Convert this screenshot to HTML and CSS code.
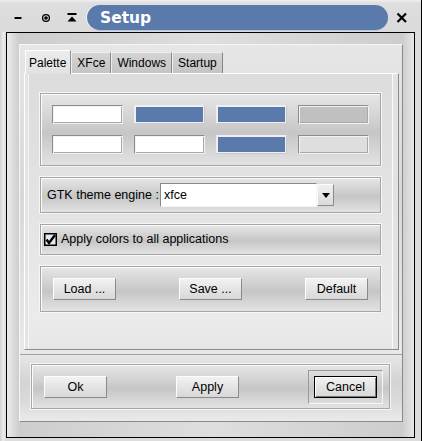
FILE: index.html
```html
<!DOCTYPE html>
<html>
<head>
<meta charset="utf-8">
<link rel="stylesheet" href="styles.css">
</head>
<body>
<div class="window">
  <div class="titlebar">
    <svg class="tb-btn tb-min" width="16" height="16" viewBox="0 0 16 16"><rect x="4.5" y="7" width="7" height="2" fill="#000"/></svg>
    <svg class="tb-btn tb-stick" width="16" height="16" viewBox="0 0 16 16"><circle cx="8" cy="8" r="3.4" fill="none" stroke="#000" stroke-width="1.3"/><circle cx="8" cy="8" r="1.8" fill="#000"/></svg>
    <svg class="tb-btn tb-shade" width="16" height="16" viewBox="0 0 16 16"><rect x="3.5" y="3" width="9" height="2" fill="#000"/><polygon points="8,6.5 12.5,11.5 3.5,11.5" fill="#000"/></svg>
    <div class="title-pill"><span class="title-text">Setup</span></div>
    <svg class="tb-btn tb-close" width="16" height="16" viewBox="0 0 16 16"><path d="M3.5 3.5 L12 12 M12 3.5 L3.5 12" stroke="#000" stroke-width="2.2" fill="none"/></svg>
  </div>
  <div class="frame">
    <div class="dialog">
      <div class="notebook">
        <div class="tabs">
          <div class="tab tab-active">Palette</div>
          <div class="tab">XFce</div>
          <div class="tab">Windows</div>
          <div class="tab">Startup</div>
        </div>
        <div class="page">
          <div class="group palette">
            <div class="swatch sw-white"></div>
            <div class="swatch sw-blue"></div>
            <div class="swatch sw-blue"></div>
            <div class="swatch sw-gray"></div>
            <div class="swatch sw-white"></div>
            <div class="swatch sw-white"></div>
            <div class="swatch sw-blue"></div>
            <div class="swatch sw-light"></div>
          </div>
          <div class="group engine">
            <span class="engine-label">GTK theme engine :</span>
            <div class="combo">
              <div class="combo-entry">xfce</div>
              <div class="combo-btn"><svg width="8" height="5" viewBox="0 0 8 5"><polygon points="0,0 8,0 4,5" fill="#000"/></svg></div>
            </div>
          </div>
          <div class="group apply">
            <svg class="check" width="13" height="13" viewBox="0 0 13 13"><rect x="0.75" y="0.75" width="11.5" height="11.5" fill="#e8e8e8" stroke="#000" stroke-width="1.5"/><path d="M2.5 6.5 L5 10 L11 2" stroke="#000" stroke-width="2.4" fill="none"/></svg>
            <span>Apply colors to all applications</span>
          </div>
          <div class="group files">
            <div class="btn">Load ...</div>
            <div class="btn">Save ...</div>
            <div class="btn">Default</div>
          </div>
        </div>
      </div>
      <div class="actions-wrap">
        <div class="group actions">
          <div class="btn">Ok</div>
          <div class="btn">Apply</div>
          <div class="default-frame"><div class="btn btn-default">Cancel</div></div>
        </div>
      </div>
    </div>
  </div>
</div>
</body>
</html>
```

FILE: styles.css
```css
* { box-sizing: border-box; }
html, body { margin: 0; padding: 0; }
body {
  width: 422px;
  height: 441px;
  overflow: hidden;
  background: #d8d8d8;
  font-family: "Liberation Sans", Arial, sans-serif;
  font-size: 12.5px;
  color: #000;
}
.window {
  width: 422px;
  height: 441px;
  display: flex;
  flex-direction: column;
  border-right: 1px solid #000;
  background: linear-gradient(90deg, #cfcfcf, #ececec 3px, #dcdcdc 6px);
}
.titlebar {
  height: 32px;
  flex: none;
  display: flex;
  align-items: center;
  padding-left: 10px;
  padding-top: 4px;
  background: linear-gradient(180deg, #f0f0f0, #dedede 3px, #dadada);
}
.tb-btn { flex: none; display: block; }
.tb-stick { margin-left: 12px; }
.tb-shade { margin-left: 10px; }
.tb-close { margin-left: 6px; }
.title-pill {
  margin-left: 7px;
  width: 301px;
  height: 25px;
  margin-top: -1px;
  border-radius: 13px;
  background: #5a7aac;
  box-shadow: -1px 0 0 #f4f4f4, 0 1px 0 #b8c4d8;
  display: flex;
  align-items: center;
  padding-left: 13px;
}
.title-text {
  font-family: "DejaVu Sans", Verdana, sans-serif;
  font-weight: bold;
  font-size: 15.5px;
  color: #fff;
  margin-top: 1px;
}
.frame {
  flex: 1;
  margin: 0 6px 3px 6px;
  border: 1px solid #000;
  padding: 11px 11px 15px 12px;
  background: linear-gradient(90deg, #ececec, #cdcdcd 12px, #dedede 50%, #cdcdcd calc(100% - 12px), #e6e6e6);
  display: flex;
}
.dialog {
  flex: 1;
  display: flex;
  flex-direction: column;
  border: 1px solid;
  border-color: #f6f6f6 #8a8a8a #8a8a8a #f6f6f6;
  background: linear-gradient(180deg, #e6e6e6, #d8d8d8 40%, #e8e8e8 80%, #e2e2e2);
}
.notebook {
  padding: 5px 3px 4px 4px;
  border-bottom: 1px solid #a0a0a0;
  box-shadow: 0 1px 0 #f8f8f8;
  flex: none;
}
.tabs {
  display: flex;
  align-items: flex-end;
  height: 23px;
  padding-left: 1px;
  position: relative;
  z-index: 1;
  font-size: 12px;
}
.tab {
  height: 21px;
  padding: 0 5px;
  display: flex;
  align-items: center;
  background: linear-gradient(180deg, #d4d4d4, #c4c4c4);
  border: 1px solid;
  border-bottom: none;
  border-color: #eeeeee #888888 #888888 #eeeeee;
}
.tab-active {
  height: 24px;
  margin-bottom: -1px;
  padding: 0 4px 0 3px;
  background: linear-gradient(180deg, #ececec, #e2e2e2);
  border-color: #ffffff #909090 #909090 #ffffff;
}
.page {
  height: 277px;
  border: 1px solid;
  border-color: #ffffff #8c8c8c #8c8c8c #ffffff;
  padding: 19px 17px 0 15px;
  display: flex;
  flex-direction: column;
  gap: 11px;
  background: linear-gradient(180deg, #dcdcdc, #e0e0e0 30%, #ebebeb 90%, #e6e6e6);
  box-shadow: inset -5px 0 0 #e2e2e2, inset -6px 0 0 #fafafa, inset 3px 0 0 #e4e4e4, inset 4px 0 0 #f4f4f4;
}
.group {
  border: 1px solid #a6a6a6;
  box-shadow: 0 0 0 1px #f6f6f6, inset 1px 1px 0 #fbfbfb;
  background: linear-gradient(180deg, #e6e6e6, #d2d2d2 35%, #c6c6c6 55%, #d6d6d6 80%, #e2e2e2);
}
.palette {
  height: 73px;
  display: grid;
  grid-template-columns: repeat(4, 1fr);
  grid-template-rows: 19px 19px;
  column-gap: 11px;
  row-gap: 11px;
  padding: 11px 11px 0 11px;
}
.swatch {
  border: 1px solid;
  border-color: #8c8c8c #f2f2f2 #f2f2f2 #8c8c8c;
  box-shadow: inset 1px 1px 0 #f2f2f2, inset -1px -1px 0 #a8a8a8;
}
.sw-white { background: #ffffff; }
.sw-blue { background: #5a7aac; box-shadow: inset 1px 1px 0 #eef0f4, inset -1px -1px 0 #eef0f4; border-color: #eeeeee #c8c8c8 #c8c8c8 #eeeeee; }
.sw-gray { background: #c0c0c0; }
.sw-light { background: #dedede; }
.engine {
  height: 36px;
  display: flex;
  align-items: center;
  padding-left: 6px;
}
.engine-label { width: 113px; white-space: nowrap; }
.combo {
  display: flex;
  align-items: center;
  height: 24px;
}
.combo-entry {
  width: 157px;
  height: 24px;
  background: #fff;
  border: 1px solid;
  border-color: #8a8a8a #f4f4f4 #f4f4f4 #8a8a8a;
  padding-left: 3px;
  display: flex;
  align-items: center;
}
.combo-btn {
  width: 17px;
  height: 22px;
  border: 1px solid;
  border-color: #fbfbfb #8a8a8a #8a8a8a #fbfbfb;
  background: linear-gradient(180deg, #f0f0f0, #dadada);
  display: flex;
  align-items: center;
  justify-content: center;
}
.combo-btn svg { display: block; margin-top: 1px; }
.apply {
  height: 31px;
  display: flex;
  align-items: center;
  padding-left: 3px;
  gap: 4px;
}
.apply span { margin-top: -1px; }
.check { display: block; flex: none; }
.files {
  height: 46px;
  display: flex;
  align-items: center;
  justify-content: space-between;
  padding: 0 12px 0 12px;
}
.btn {
  width: 63px;
  height: 22px;
  display: flex;
  align-items: center;
  justify-content: center;
  border: 1px solid;
  border-color: #fdfdfd #8a8a8a #8a8a8a #fdfdfd;
  background: linear-gradient(180deg, #f2f2f2, #e4e4e4 50%, #d8d8d8);
  flex: none;
}
.actions-wrap {
  flex: 1;
  padding: 9px 12px 12px 11px;
  display: flex;
  background: linear-gradient(180deg, #e6e6e6, #d4d4d4 40%, #dadada 70%, #eaeaea);
}
.actions {
  flex: 1;
  display: flex;
  align-items: center;
  justify-content: space-between;
  padding: 0 6px 0 12px;
}
.default-frame {
  padding: 5px;
  border: 1px solid;
  border-color: #9a9a9a #f6f6f6 #f6f6f6 #9a9a9a;
}
.btn-default {
  width: 63px;
  border: 1px solid #000;
  box-shadow: inset 1px 1px 0 #fff, inset -1px -1px 0 #777;
}
```
